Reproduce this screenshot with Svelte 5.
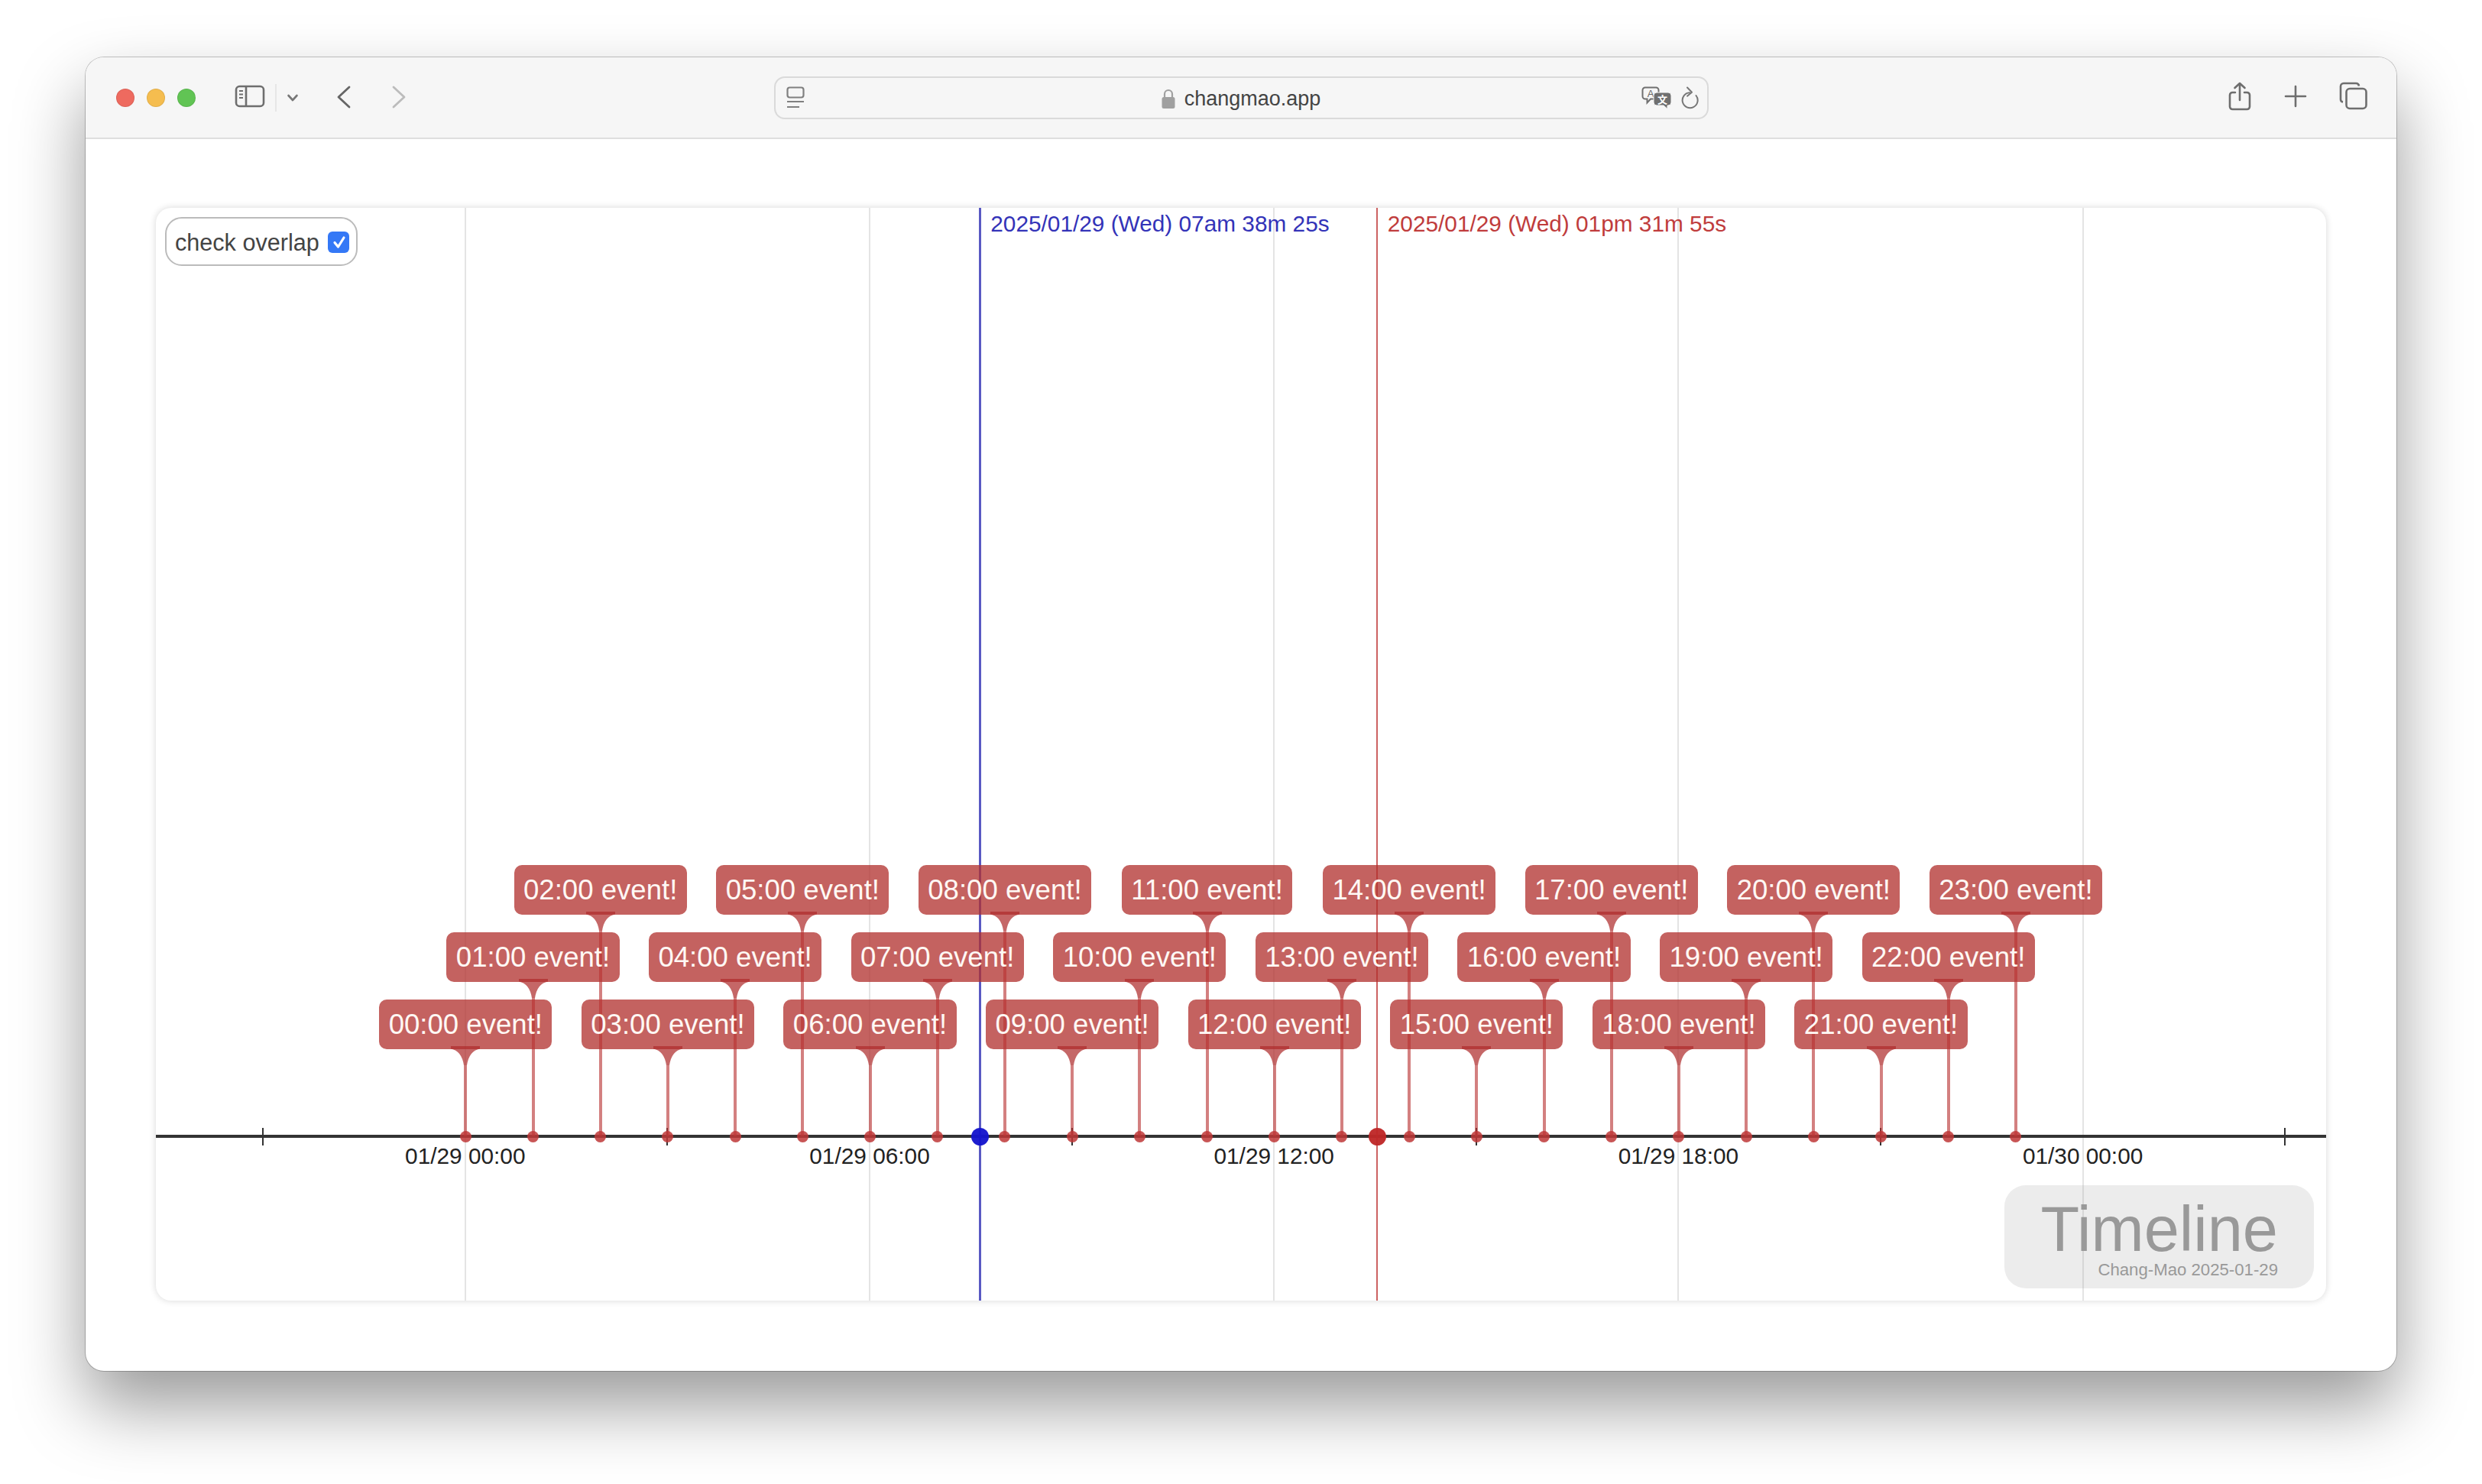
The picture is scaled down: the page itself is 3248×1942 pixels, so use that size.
<script>
  const HOUR = 88.2;
  const ORIGIN = 404.8;
  const ROW_TOP = [1036, 948, 860];
  const xAt = (h) => ORIGIN + HOUR * h;
  const pad = (n) => String(n).padStart(2, '0');

  const events = Array.from({ length: 24 }, (_, h) => ({
    label: `${pad(h)}:00 event!`,
    x: xAt(h) + 0.5,
    top: ROW_TOP[h % 3]
  }));
  const gridLines = [
    { h: 0, label: '01/29 00:00' },
    { h: 6, label: '01/29 06:00' },
    { h: 12, label: '01/29 12:00' },
    { h: 18, label: '01/29 18:00' },
    { h: 24, label: '01/30 00:00' }
  ];
  const ticks = [-3, 3, 9, 15, 21, 27];
  const cursors = [
    { x: 1078.5, cls: 'blue', text: '2025/01/29 (Wed) 07am 38m 25s' },
    { x: 1598, cls: 'red', text: '2025/01/29 (Wed) 01pm 31m 55s' }
  ];
</script>

<div class="stage">
  <div class="window">
    <header class="toolbar">
      <div class="lights">
        <span class="light l-red"></span>
        <span class="light l-yellow"></span>
        <span class="light l-green"></span>
      </div>
      <svg class="ic-sidebar" viewBox="0 0 40 30" fill="none" stroke="#6e6e6e" stroke-width="2.6">
        <rect x="2" y="2" width="36" height="26" rx="4.5" />
        <path d="M15 2v26" />
        <path d="M6 8h5M6 12.5h5M6 17h5" stroke-width="2" />
      </svg>
      <span class="divider"></span>
      <svg class="ic-chev" viewBox="0 0 16 12" fill="none" stroke="#777" stroke-width="2.6" stroke-linecap="round" stroke-linejoin="round">
        <path d="M2.5 3l5.5 6 5.5-6" />
      </svg>
      <svg class="ic-back" viewBox="0 0 20 30" fill="none" stroke="#666" stroke-width="2.8" stroke-linecap="round" stroke-linejoin="round">
        <path d="M17 2L3 15l14 13" />
      </svg>
      <svg class="ic-fwd" viewBox="0 0 20 30" fill="none" stroke="#bcbcbc" stroke-width="2.8" stroke-linecap="round" stroke-linejoin="round">
        <path d="M3 2l14 13L3 28" />
      </svg>

      <div class="url">
        <svg class="ic-page" viewBox="0 0 24 30" fill="none" stroke="#808080" stroke-width="2.2">
          <rect x="1.5" y="1.5" width="21" height="13" rx="3" />
          <path d="M1 20h22M1 27h16" />
        </svg>
        <div class="address">
          <svg class="ic-lock" viewBox="0 0 18 26">
            <path d="M4 12V7a5 5 0 0 1 10 0v5" fill="none" stroke="#a0a0a0" stroke-width="2.2" />
            <rect x="0.5" y="11" width="17" height="15" rx="2.5" fill="#a0a0a0" />
          </svg>
          <span>changmao.app</span>
        </div>
        <div class="url-end">
          <svg class="ic-trans" viewBox="0 0 40 30">
            <path d="M5 1.5h14a3.5 3.5 0 0 1 3.5 3.5v8a3.5 3.5 0 0 1-3.5 3.5h-7l-4.5 5v-5H5A3.5 3.5 0 0 1 1.5 13V5A3.5 3.5 0 0 1 5 1.5z" fill="#f6f6f6" stroke="#707070" stroke-width="2" />
            <text x="12" y="13.5" class="glyph-a">A</text>
            <path d="M20 8h15a4 4 0 0 1 4 4v9a4 4 0 0 1-4 4h-1v4.5L29 25h-9a4 4 0 0 1-4-4v-9a4 4 0 0 1 4-4z" fill="#6f6f6f" stroke="#f6f6f6" stroke-width="1" />
            <text x="27.5" y="22" class="glyph-zh">文</text>
          </svg>
          <svg class="ic-reload" viewBox="0 0 24 30" fill="none" stroke="#777" stroke-width="2" stroke-linecap="round" stroke-linejoin="round">
            <path d="M20.5 12a10 10 0 1 1-8.5-3.8" />
            <path d="M9 1.5l6 6.2-6 5" />
          </svg>
        </div>
      </div>

      <svg class="ic-share" viewBox="0 0 34 38" fill="none" stroke="#6e6e6e" stroke-width="2.6" stroke-linecap="round" stroke-linejoin="round">
        <path d="M11 14H7.5A3.5 3.5 0 0 0 4 17.5v15A3.5 3.5 0 0 0 7.5 36h19a3.5 3.5 0 0 0 3.5-3.5v-15a3.5 3.5 0 0 0-3.5-3.5H23" />
        <path d="M17 24V2M10.5 8L17 2l6.5 6" />
      </svg>
      <svg class="ic-plus" viewBox="0 0 30 30" fill="none" stroke="#6e6e6e" stroke-width="2.6" stroke-linecap="round">
        <path d="M15 2v26M2 15h26" />
      </svg>
      <svg class="ic-tabs" viewBox="0 0 38 38" fill="none" stroke="#6e6e6e" stroke-width="2.6">
        <path d="M5 26.5A3.5 3.5 0 0 1 2 23V6a4 4 0 0 1 4-4h16a4 4 0 0 1 4 3.5" />
        <rect x="9.5" y="9" width="26" height="26" rx="4.5" />
      </svg>
    </header>

    <main class="page">
      <section class="timeline">
        {#each gridLines as g}
          <div class="grid-line" style="left:{xAt(g.h)}px"></div>
          <div class="date-label" style="left:{xAt(g.h)}px">{g.label}</div>
        {/each}

        <div class="logo">
          <div class="logo-title">Timeline</div>
          <div class="logo-sub">Chang-Mao 2025-01-29</div>
        </div>

        <label class="overlap">
          <span>check overlap</span>
          <input type="checkbox" checked />
          <svg class="check" viewBox="0 0 28 28" fill="none" stroke="#fff" stroke-width="3.2" stroke-linecap="round" stroke-linejoin="round">
            <path d="M8 14.5l4.5 5.5L20 8" />
          </svg>
        </label>

        <div class="axis"></div>
        {#each ticks as t}
          <div class="tick" style="left:{xAt(t)}px"></div>
        {/each}

        {#each cursors as c}
          <div class="cursor {c.cls}" style="left:{c.x}px">
            <span class="cursor-text">{c.text}</span>
            <span class="cursor-dot"></span>
          </div>
        {/each}

        {#each events as e}
          <div class="event" style="left:{e.x}px;top:{e.top}px">
            <div class="bubble-wrap">
              <div class="bubble"><span class="bubble-text">{e.label}</span></div>
            </div>
            <svg class="tail" viewBox="0 0 38 25">
              <path d="M0 0h38v3.5Q24 6 21 25h-4Q14 6 0 3.5z" />
            </svg>
            <div class="stem"></div>
            <div class="dot"></div>
          </div>
        {/each}
      </section>
    </main>
  </div>
</div>

<style>
  :global(body) {
    margin: 0;
    background: #fff;
    font-family: "Liberation Sans", Arial, sans-serif;
  }
  .stage {
    width: 3248px;
    height: 1942px;
    padding: 75px 112px 148px;
    box-sizing: border-box;
    overflow: hidden;
  }
  .window {
    height: 1719px;
    display: flex;
    flex-direction: column;
    background: #fff;
    border-radius: 24px;
    box-shadow: 0 0 0 1px rgba(0, 0, 0, 0.22), 0 46px 92px rgba(0, 0, 0, 0.4);
    overflow: hidden;
  }

  /* toolbar */
  .toolbar {
    flex: none;
    height: 107px;
    box-sizing: border-box;
    display: flex;
    align-items: center;
    padding-left: 40px;
    background: #f6f6f6;
    border-bottom: 2px solid #dedede;
  }
  .toolbar svg {
    flex: none;
    display: block;
  }
  .lights {
    display: flex;
    gap: 16px;
  }
  .light {
    width: 24px;
    height: 24px;
    border-radius: 50%;
    box-sizing: border-box;
    border: 1px solid rgba(0, 0, 0, 0.08);
  }
  .l-red { background: #ee6a5f; }
  .l-yellow { background: #f5bd4f; }
  .l-green { background: #61c454; }
  .ic-sidebar { width: 40px; height: 30px; margin: -4px 0 0 51px; }
  .divider {
    width: 2px;
    height: 36px;
    margin-left: 13px;
    background: #e6e6e6;
  }
  .ic-chev { width: 16px; height: 12px; margin-left: 13px; }
  .ic-back { width: 20px; height: 30px; margin: -1px 0 0 49px; }
  .ic-fwd { width: 20px; height: 30px; margin: -1px 0 0 52px; }
  .url {
    width: 1223px;
    height: 56px;
    margin-left: 481px;
    box-sizing: border-box;
    display: grid;
    grid-template-columns: 1fr auto 1fr;
    align-items: center;
    padding: 0 11px 0 14px;
    border: 2px solid #dadada;
    border-radius: 14px;
    background: #f6f6f6;
  }
  .ic-page { width: 24px; height: 30px; }
  .address {
    display: flex;
    align-items: center;
    gap: 12px;
    font-size: 27px;
    line-height: 34px;
    color: #444;
    transform: translate(-2px, 1px);
  }
  .ic-lock { width: 18px; height: 26px; }
  .url-end {
    display: flex;
    justify-content: flex-end;
    align-items: center;
    gap: 11px;
  }
  .ic-trans { width: 40px; height: 30px; }
  .ic-reload { width: 24px; height: 30px; }
  .glyph-a {
    font-size: 13px;
    fill: #666;
    text-anchor: middle;
    font-family: "Liberation Sans", sans-serif;
  }
  .glyph-zh {
    font-size: 13px;
    font-weight: 700;
    fill: #fff;
    text-anchor: middle;
    font-family: "Noto Sans CJK SC", sans-serif;
  }
  .ic-share { width: 34px; height: 38px; margin: -4px 0 0 678px; }
  .ic-plus { width: 30px; height: 30px; margin: -3px 0 0 41px; }
  .ic-tabs { width: 38px; height: 38px; margin: -3px 0 0 42px; }

  /* page */
  .page {
    flex: 1;
    min-height: 0;
    display: flex;
    padding: 90px 92px 92px;
  }
  .timeline {
    position: relative;
    flex: 1;
    border-radius: 20px;
    background: #fff;
    box-shadow: 0 0 10px rgba(0, 0, 0, 0.16);
    overflow: hidden;
  }
  .grid-line {
    position: absolute;
    top: 0;
    bottom: 0;
    width: 2px;
    margin-left: -1px;
    background: #e4e4e4;
  }
  .date-label {
    position: absolute;
    top: 1223px;
    transform: translateX(-50%);
    font-size: 29.8px;
    line-height: 36px;
    color: #222;
    white-space: nowrap;
  }
  .logo {
    position: absolute;
    right: 16px;
    bottom: 16px;
    width: 405px;
    height: 135px;
    box-sizing: border-box;
    padding: 0 47px 0 0;
    border-radius: 28px;
    background: rgba(150, 150, 150, 0.18);
    text-align: right;
    color: #999;
  }
  .logo-title {
    font-size: 83px;
    line-height: 84px;
    margin: 16px 0 0 0;
  }
  .logo-sub {
    font-size: 22.2px;
    line-height: 26px;
    margin-top: -2px;
  }
  .overlap {
    position: absolute;
    left: 12px;
    top: 12px;
    height: 64px;
    width: 252px;
    box-sizing: border-box;
    display: flex;
    align-items: center;
    gap: 11px;
    padding: 2px 0 0 11px;
    border: 2px solid #bbb;
    border-radius: 22px;
    background: #fff;
    font-size: 30.6px;
    color: #444;
    z-index: 3;
  }
  .overlap input {
    appearance: none;
    width: 28px;
    height: 28px;
    margin: 0;
    border-radius: 6px;
    background: #3478f6;
  }
  .check {
    position: absolute;
    right: 8px;
    top: 17px;
    width: 28px;
    height: 28px;
  }
  .axis {
    position: absolute;
    left: 0;
    right: 0;
    top: 1213px;
    height: 4px;
    background: #333;
  }
  .tick {
    position: absolute;
    top: 1204px;
    height: 23px;
    width: 2px;
    margin-left: -1px;
    background: #333;
  }

  /* events: fills below stems, label text above them */
  .event {
    position: absolute;
    width: 0;
    bottom: calc(100% - 1215px);
  }
  .bubble-wrap {
    position: absolute;
    top: 0;
    left: -160px;
    width: 320px;
    display: flex;
    justify-content: center;
  }
  .bubble {
    height: 65px;
    padding: 0 12.5px;
    border-radius: 10px;
    background: rgba(177, 48, 46, 0.76);
    color: #fff;
    font-size: 36.6px;
    line-height: 65px;
    white-space: nowrap;
  }
  .bubble-text {
    position: relative;
    z-index: 3;
    color: #fff8f4;
  }
  .tail {
    position: absolute;
    top: 61px;
    left: -19px;
    width: 38px;
    height: 25px;
    fill: rgba(175, 45, 45, 0.72);
    z-index: 2;
  }
  .stem {
    position: absolute;
    top: 86px;
    bottom: 0;
    left: -2px;
    width: 4px;
    background: rgba(184, 50, 50, 0.62);
    z-index: 2;
  }
  .dot {
    position: absolute;
    bottom: -7.5px;
    left: -7.5px;
    width: 15px;
    height: 15px;
    border-radius: 50%;
    background: rgba(190, 55, 55, 0.85);
    z-index: 2;
  }

  /* cursors */
  .cursor {
    position: absolute;
    top: 0;
    bottom: 0;
    width: 2.5px;
    margin-left: -1.25px;
  }
  .cursor-text {
    position: absolute;
    left: 15px;
    top: 3px;
    font-size: 29.8px;
    line-height: 36px;
    white-space: nowrap;
  }
  .cursor-dot {
    position: absolute;
    top: 1204px;
    left: -10px;
    width: 23px;
    height: 23px;
    border-radius: 50%;
  }
  .blue { background: rgba(60, 60, 185, 0.85); }
  .blue .cursor-text { color: #3333b8; }
  .blue .cursor-dot { background: rgba(20, 20, 205, 0.96); }
  .red { background: rgba(195, 70, 70, 0.85); }
  .red .cursor-text { color: #c03c3c; }
  .red .cursor-dot { background: rgba(190, 40, 40, 0.96); }
</style>
